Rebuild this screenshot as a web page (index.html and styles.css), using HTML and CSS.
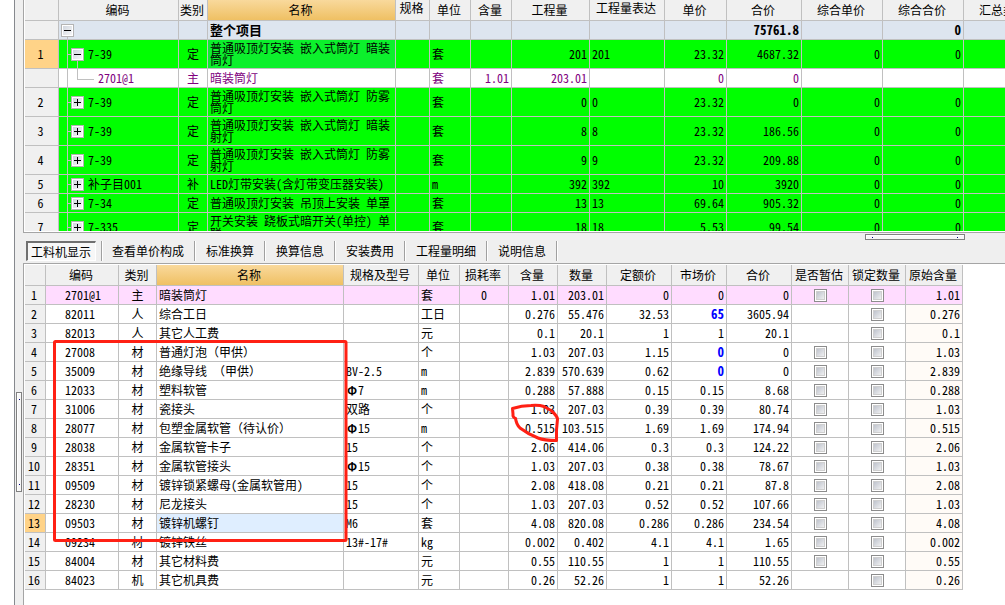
FILE: index.html
```html
<!DOCTYPE html>
<html lang="zh-CN">
<head>
<meta charset="utf-8">
<title>工料机显示</title>
<link rel="stylesheet" href="styles.css">
</head>
<body>
<div class="app">
<div class="rail"><div class="grip grip-v"><i></i><i></i></div></div>
<main class="content">
<section class="pane pane-top"><div class="clip">
<table class="grid quota">
<colgroup><col class="w34"><col class="w120"><col class="w29"><col class="w188"><col class="w34"><col class="w41"><col class="w41"><col class="w78"><col class="w75"><col class="w62"><col class="w75"><col class="w81"><col class="w81"><col class="w81"></colgroup>
<thead><tr><th></th><th>编码</th><th>类别</th><th class="hot">名称</th><th class="up">规格</th><th>单位</th><th>含量</th><th>工程量</th><th class="up">工程量表达</th><th>单价</th><th>合价</th><th>综合单价</th><th>综合合价</th><th>汇总类别</th></tr></thead>
<tbody>
<tr class="total"><th></th><td class="root"><div class="node"><button class="box" aria-label="折叠"><svg viewBox="0 0 8 8"><path d="M1 4.5h7"/></svg></button></div></td><td></td><td class="l">整个项目</td><td></td><td></td><td></td><td></td><td></td><td></td><td>75761.8</td><td></td><td>0</td><td></td></tr>
<tr class="tall green"><th class="cur">1</th><td class="tree open"><div class="node"><button class="box" aria-label="折叠"><svg viewBox="0 0 8 8"><path d="M1 4.5h7"/></svg></button>7-39</div></td><td class="c">定</td><td class="l sel">普通吸顶灯安装 嵌入式筒灯 暗装<br>筒灯</td><td></td><td class="l">套</td><td></td><td>201</td><td class="l">201</td><td>23.32</td><td>4687.32</td><td>0</td><td>0</td><td></td></tr>
<tr class="child"><th></th><td class="leaf">2701@1</td><td class="c">主</td><td class="l">暗装筒灯</td><td></td><td class="l">套</td><td>1.01</td><td>203.01</td><td></td><td>0</td><td>0</td><td></td><td></td><td></td></tr>
<tr class="tall green"><th>2</th><td class="tree"><div class="node"><button class="box" aria-label="展开"><svg viewBox="0 0 8 8"><path d="M1 4.5h7M4.5 1v7"/></svg></button>7-39</div></td><td class="c">定</td><td class="l">普通吸顶灯安装 嵌入式筒灯 防雾<br>筒灯</td><td></td><td class="l">套</td><td></td><td>0</td><td class="l">0</td><td>23.32</td><td>0</td><td>0</td><td>0</td><td></td></tr>
<tr class="tall green"><th>3</th><td class="tree"><div class="node"><button class="box" aria-label="展开"><svg viewBox="0 0 8 8"><path d="M1 4.5h7M4.5 1v7"/></svg></button>7-39</div></td><td class="c">定</td><td class="l">普通吸顶灯安装 嵌入式筒灯 暗装<br>射灯</td><td></td><td class="l">套</td><td></td><td>8</td><td class="l">8</td><td>23.32</td><td>186.56</td><td>0</td><td>0</td><td></td></tr>
<tr class="tall green"><th>4</th><td class="tree"><div class="node"><button class="box" aria-label="展开"><svg viewBox="0 0 8 8"><path d="M1 4.5h7M4.5 1v7"/></svg></button>7-39</div></td><td class="c">定</td><td class="l">普通吸顶灯安装 嵌入式筒灯 防雾<br>射灯</td><td></td><td class="l">套</td><td></td><td>9</td><td class="l">9</td><td>23.32</td><td>209.88</td><td>0</td><td>0</td><td></td></tr>
<tr class="green"><th>5</th><td class="tree"><div class="node"><button class="box" aria-label="展开"><svg viewBox="0 0 8 8"><path d="M1 4.5h7M4.5 1v7"/></svg></button>补子目001</div></td><td class="c">补</td><td class="l">LED灯带安装(含灯带变压器安装)</td><td></td><td class="l">m</td><td></td><td>392</td><td class="l">392</td><td>10</td><td>3920</td><td>0</td><td>0</td><td></td></tr>
<tr class="green"><th>6</th><td class="tree"><div class="node"><button class="box" aria-label="展开"><svg viewBox="0 0 8 8"><path d="M1 4.5h7M4.5 1v7"/></svg></button>7-34</div></td><td class="c">定</td><td class="l">普通吸顶灯安装 吊顶上安装 单罩</td><td></td><td class="l">套</td><td></td><td>13</td><td class="l">13</td><td>69.64</td><td>905.32</td><td>0</td><td>0</td><td></td></tr>
<tr class="tall green"><th>7</th><td class="tree"><div class="node"><button class="box" aria-label="展开"><svg viewBox="0 0 8 8"><path d="M1 4.5h7M4.5 1v7"/></svg></button>7-335</div></td><td class="c">定</td><td class="l">开关安装 跷板式暗开关(单控) 单<br>联</td><td></td><td class="l">套</td><td></td><td>18</td><td class="l">18</td><td>5.53</td><td>99.54</td><td>0</td><td>0</td><td></td></tr>
</tbody>
</table>
</div></section>
<div class="splitter"><div class="grip grip-h"><i></i><i></i></div></div>
<nav class="tabs"><button class="active">工料机显示</button><button>查看单价构成</button><button>标准换算</button><button>换算信息</button><button>安装费用</button><button>工程量明细</button><button>说明信息</button></nav>
<section class="pane pane-bottom">
<table class="grid detail">
<colgroup><col class="w21"><col class="w73"><col class="w38"><col class="w187"><col class="w75"><col class="w41"><col class="w49"><col class="w49"><col class="w49"><col class="w65"><col class="w55"><col class="w65"><col class="w57"><col class="w57"><col class="w57"></colgroup>
<thead><tr><th></th><th>编码</th><th>类别</th><th class="hot">名称</th><th>规格及型号</th><th>单位</th><th>损耗率</th><th>含量</th><th>数量</th><th>定额价</th><th>市场价</th><th>合价</th><th>是否暂估</th><th>锁定数量</th><th>原始含量</th></tr></thead>
<tbody>
<tr class="pink"><th>1</th><td class="code">2701@1</td><td class="c">主</td><td class="l">暗装筒灯</td><td></td><td class="l">套</td><td class="c">0</td><td>1.01</td><td>203.01</td><td>0</td><td>0</td><td>0</td><td class="c"><input type="checkbox" aria-label="是否暂估"></td><td class="c"><input type="checkbox" aria-label="锁定数量"></td><td class="orig">1.01</td></tr>
<tr><th>2</th><td class="code">82011</td><td class="c">人</td><td class="l">综合工日</td><td></td><td class="l">工日</td><td></td><td>0.276</td><td>55.476</td><td>32.53</td><td class="blue">65</td><td>3605.94</td><td></td><td class="c"><input type="checkbox" aria-label="锁定数量"></td><td class="orig">0.276</td></tr>
<tr><th>3</th><td class="code">82013</td><td class="c">人</td><td class="l">其它人工费</td><td></td><td class="l">元</td><td></td><td>0.1</td><td>20.1</td><td>1</td><td>1</td><td>20.1</td><td></td><td class="c"><input type="checkbox" aria-label="锁定数量"></td><td class="orig">0.1</td></tr>
<tr><th>4</th><td class="code">27008</td><td class="c">材</td><td class="l">普通灯泡<span class="wide">（甲供）</span></td><td></td><td class="l">个</td><td></td><td>1.03</td><td>207.03</td><td>1.15</td><td class="blue">0</td><td>0</td><td class="c"><input type="checkbox" aria-label="是否暂估"></td><td class="c"><input type="checkbox" aria-label="锁定数量"></td><td class="orig">1.03</td></tr>
<tr><th>5</th><td class="code">35009</td><td class="c">材</td><td class="l">绝缘导线 <span class="wide">（甲供）</span></td><td class="l">BV-2.5</td><td class="l">m</td><td></td><td>2.839</td><td>570.639</td><td>0.62</td><td class="blue">0</td><td>0</td><td class="c"><input type="checkbox" aria-label="是否暂估"></td><td class="c"><input type="checkbox" aria-label="锁定数量"></td><td class="orig">2.839</td></tr>
<tr><th>6</th><td class="code">12033</td><td class="c">材</td><td class="l">塑料软管</td><td class="l"><b class="phi">Φ</b>7</td><td class="l">m</td><td></td><td>0.288</td><td>57.888</td><td>0.15</td><td>0.15</td><td>8.68</td><td class="c"><input type="checkbox" aria-label="是否暂估"></td><td class="c"><input type="checkbox" aria-label="锁定数量"></td><td class="orig">0.288</td></tr>
<tr><th>7</th><td class="code">31006</td><td class="c">材</td><td class="l">瓷接头</td><td class="l">双路</td><td class="l">个</td><td></td><td>1.03</td><td>207.03</td><td>0.39</td><td>0.39</td><td>80.74</td><td class="c"><input type="checkbox" aria-label="是否暂估"></td><td class="c"><input type="checkbox" aria-label="锁定数量"></td><td class="orig">1.03</td></tr>
<tr><th>8</th><td class="code">28077</td><td class="c">材</td><td class="l">包塑金属软管<span class="wide">（待认价）</span></td><td class="l"><b class="phi">Φ</b>15</td><td class="l">m</td><td></td><td>0.515</td><td>103.515</td><td>1.69</td><td>1.69</td><td>174.94</td><td class="c"><input type="checkbox" aria-label="是否暂估"></td><td class="c"><input type="checkbox" aria-label="锁定数量"></td><td class="orig">0.515</td></tr>
<tr><th>9</th><td class="code">28038</td><td class="c">材</td><td class="l">金属软管卡子</td><td class="l">15</td><td class="l">个</td><td></td><td>2.06</td><td>414.06</td><td>0.3</td><td>0.3</td><td>124.22</td><td class="c"><input type="checkbox" aria-label="是否暂估"></td><td class="c"><input type="checkbox" aria-label="锁定数量"></td><td class="orig">2.06</td></tr>
<tr><th>10</th><td class="code">28351</td><td class="c">材</td><td class="l">金属软管接头</td><td class="l"><b class="phi">Φ</b>15</td><td class="l">个</td><td></td><td>1.03</td><td>207.03</td><td>0.38</td><td>0.38</td><td>78.67</td><td class="c"><input type="checkbox" aria-label="是否暂估"></td><td class="c"><input type="checkbox" aria-label="锁定数量"></td><td class="orig">1.03</td></tr>
<tr><th>11</th><td class="code">09509</td><td class="c">材</td><td class="l">镀锌锁紧螺母(金属软管用)</td><td class="l">15</td><td class="l">个</td><td></td><td>2.08</td><td>418.08</td><td>0.21</td><td>0.21</td><td>87.8</td><td class="c"><input type="checkbox" aria-label="是否暂估"></td><td class="c"><input type="checkbox" aria-label="锁定数量"></td><td class="orig">2.08</td></tr>
<tr><th>12</th><td class="code">28230</td><td class="c">材</td><td class="l">尼龙接头</td><td class="l">15</td><td class="l">个</td><td></td><td>1.03</td><td>207.03</td><td>0.52</td><td>0.52</td><td>107.66</td><td class="c"><input type="checkbox" aria-label="是否暂估"></td><td class="c"><input type="checkbox" aria-label="锁定数量"></td><td class="orig">1.03</td></tr>
<tr><th class="cur">13</th><td class="code">09503</td><td class="c">材</td><td class="l sel">镀锌机螺钉</td><td class="l">M6</td><td class="l">套</td><td></td><td>4.08</td><td>820.08</td><td>0.286</td><td>0.286</td><td>234.54</td><td class="c"><input type="checkbox" aria-label="是否暂估"></td><td class="c"><input type="checkbox" aria-label="锁定数量"></td><td class="orig">4.08</td></tr>
<tr><th>14</th><td class="code">09234</td><td class="c">材</td><td class="l">镀锌铁丝</td><td class="l">13#-17#</td><td class="l">kg</td><td></td><td>0.002</td><td>0.402</td><td>4.1</td><td>4.1</td><td>1.65</td><td class="c"><input type="checkbox" aria-label="是否暂估"></td><td class="c"><input type="checkbox" aria-label="锁定数量"></td><td class="orig">0.002</td></tr>
<tr><th>15</th><td class="code">84004</td><td class="c">材</td><td class="l">其它材料费</td><td></td><td class="l">元</td><td></td><td>0.55</td><td>110.55</td><td>1</td><td>1</td><td>110.55</td><td class="c"><input type="checkbox" aria-label="是否暂估"></td><td class="c"><input type="checkbox" aria-label="锁定数量"></td><td class="orig">0.55</td></tr>
<tr><th>16</th><td class="code">84023</td><td class="c">机</td><td class="l">其它机具费</td><td></td><td class="l">元</td><td></td><td>0.26</td><td>52.26</td><td>1</td><td>1</td><td>52.26</td><td></td><td class="c"><input type="checkbox" aria-label="锁定数量"></td><td class="orig">0.26</td></tr>
</tbody>
</table>
<svg class="marks" width="560" height="300" viewBox="24 264 560 300"><rect x="54.5" y="341.5" width="291.500" height="199" rx="1"/><path d="M516 419C514 417 512.500 418 513 414L512.500 408.500C520 406 526 405.500 531 405.500C537 405 541 405.500 544 406.500L551 410.500C554 413 557 416 557.500 419L556.500 430V440.500C550 440.500 543 440 538 438C530 435 524 431 520 428C517 425 516 423 515.500 418"/></svg>
</section>
</main>
</div>
</body>
</html>
```
FILE: styles.css
```css
* { box-sizing: border-box; }
body {
  margin: 0;
  background: #fff;
  color: #000;
  font: 12px/12px "Noto Sans CJK SC", sans-serif;
  font-feature-settings: "hwid";
  overflow: hidden;
}
button { font: inherit; font-feature-settings: inherit; color: inherit; }
.app { display: flex; height: 100vh; padding-left: 14px; }
.rail { flex: none; width: 9px; background: #efefef; border-left: 1px solid #86898e; padding-left: 1px; }
.content { flex: 1; min-width: 0; display: flex; flex-direction: column; background: #efefef; }
.pane { flex: none; border-left: 1px solid #a5a5a5; background: #fff; padding-left: 1px; }
.pane-top { border-bottom: 1px solid #a5a5a5; padding-bottom: 1px; height: 233px; }
.clip { height: 100%; overflow: hidden; }
.pane-bottom { flex: 1; border-top: 1px solid #a5a5a5; padding-top: 1px; position: relative; overflow: hidden; }

.grip { display: flex; justify-content: space-between; border: 1px solid #808080; background: #f7f7f7; box-shadow: inset 1px 1px #fff; }
.grip i { width: 1px; height: 1px; background: #000080; }
.grip-v { flex-direction: column; align-items: center; width: 6px; height: 100px; margin-top: 392px; padding: 6px 0; }
.splitter { flex: none; height: 8px; padding: 1px 40px 1px 0; display: flex; justify-content: flex-end; }
.grip-h { width: 100px; height: 6px; align-items: center; padding: 0 6px; }

.tabs { flex: none; display: flex; height: 22px; padding: 0 0 2px 2px; }
.tabs button { border: 0; border-right: 1px solid #a0a0a0; box-shadow: 1px 0 #fff; margin-right: 1px; background: none; padding: 0 10px; white-space: nowrap; }
.tabs .active { border: 1px solid #fff; border-top: 2px solid #707070; border-left: 2px solid #707070; box-shadow: 5px 0 #efefef, 6px 0 #a0a0a0, 7px 0 #fff; background: #f7f7f7; padding: 0 4px 0 3px; margin: 0 6px 0 1px; }

.grid { table-layout: fixed; width: 0; border-collapse: separate; border-spacing: 0; }
.grid tr { height: 19px; }
.grid thead tr { height: 21px; }
.grid .tall { height: 29px; }
.grid th, .grid td { padding: 0 2px; border: 0 solid #c0c0c0; border-width: 0 1px 1px 0; font-weight: normal; text-align: right; white-space: nowrap; overflow: hidden; }
.grid th { background: #f0f0f0; text-align: center; padding: 0 2px 0 0; }
.grid .l { text-align: left; }
.grid .c { text-align: center; }
.grid .hot { background: linear-gradient(#f9d99c, #efc063); }
.grid .cur { background: #ffd388; }
.grid .up { padding-bottom: 4px; }

.total td { background: #dde5ef; font-size: 13px; font-weight: bold; }
.green td { background-color: #0f0; }
.green .sel { background: #0cf02c; }
.child td { color: #800080; }
.grid .root, .grid .tree, .grid .leaf { text-align: left; background-repeat: no-repeat; }
.grid .root { padding: 0 0 0 2px; background-image: linear-gradient(#c0c0c0, #c0c0c0); background-size: 1px 4px; background-position: 8px bottom; }
.grid .tree { padding: 0 0 0 12px; background-image: linear-gradient(#c0c0c0, #c0c0c0), linear-gradient(#c0c0c0, #c0c0c0); background-size: 1px 100%, 5px 1px; background-position: 8px 0, 8px center; }
.grid .open { background-image: linear-gradient(#c0c0c0, #c0c0c0), linear-gradient(#c0c0c0, #c0c0c0), linear-gradient(#c0c0c0, #c0c0c0); background-size: 1px 100%, 5px 1px, 1px 50%; background-position: 8px 0, 8px center, 18px bottom; }
.grid .leaf { padding: 0 0 0 39px; background-image: linear-gradient(#c0c0c0, #c0c0c0), linear-gradient(#c0c0c0, #c0c0c0), linear-gradient(#c0c0c0, #c0c0c0); background-size: 1px 100%, 1px 10px, 17px 1px; background-position: 8px 0, 18px 0, 18px 10px; }
.node { display: flex; align-items: center; gap: 4px; }
.box { width: 13px; height: 13px; padding: 0; border: 1px solid #b4b4b4; background: linear-gradient(135deg, #ccd2dc, #fafafa); box-shadow: inset 0 0 0 1px #fff; }
.box svg { display: block; width: 8px; height: 8px; margin: 1px; fill: none; stroke: #000; }

.detail .code { text-align: left; padding-left: 19px; }
.detail .orig { background: #fffbf7; }
.detail .pink td { background: #ffdcff; }
.detail .sel { background: #dfeeff; }
.detail .blue { color: #00f; font-size: 13px; font-weight: bold; }
.wide { font-feature-settings: normal; }
.phi { display: inline-block; width: 12px; text-align: center; font-weight: bold; }
.detail input { appearance: none; display: block; width: 13px; height: 13px; margin: 0 auto; border: 1px solid #8c8c8c; background: linear-gradient(135deg, #b8bdc8, #f6f6f6) content-box, #fff; padding: 1px; box-shadow: inset 0 0 0 1px #fff, inset 0 0 0 2px #cfcfcf; }
.marks { position: absolute; left: 0; top: 0; fill: none; stroke: #ff2014; stroke-width: 3; stroke-linejoin: round; pointer-events: none; }

.w21 { width: 21px; } .w29 { width: 29px; } .w34 { width: 34px; } .w38 { width: 38px; }
.w41 { width: 41px; } .w49 { width: 49px; } .w55 { width: 55px; } .w57 { width: 57px; }
.w62 { width: 62px; } .w65 { width: 65px; } .w73 { width: 73px; } .w75 { width: 75px; }
.w78 { width: 78px; } .w81 { width: 81px; } .w120 { width: 120px; } .w187 { width: 187px; } .w188 { width: 188px; }
```
